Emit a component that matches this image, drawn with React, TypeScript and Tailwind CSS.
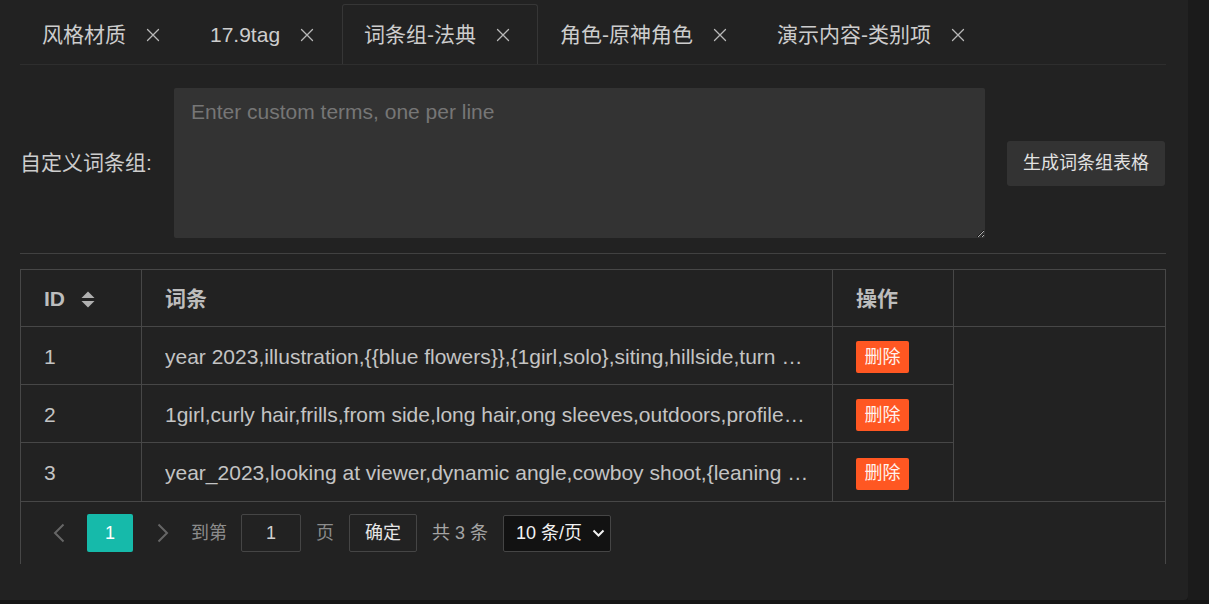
import React from "react";

const tabs = ["风格材质", "17.9tag", "词条组-法典", "角色-原神角色", "演示内容-类别项"];

const rows = [
  { id: 1, text: "year 2023,illustration,{{blue flowers}},{1girl,solo},siting,hillside,turn around,looking back,wind,petals" },
  { id: 2, text: "1girl,curly hair,frills,from side,long hair,ong sleeves,outdoors,profile,solo,upper body" },
  { id: 3, text: "year_2023,looking at viewer,dynamic angle,cowboy shoot,{leaning forward},smile" },
];

function CloseIcon() {
  return (
    <svg width="14" height="14" viewBox="0 0 14 14" className="shrink-0">
      <path d="M1.5 1.5L12.5 12.5M12.5 1.5L1.5 12.5" stroke="#b8b8b8" strokeWidth="1.3" strokeLinecap="round" />
    </svg>
  );
}

function SortIcon() {
  return (
    <svg width="14" height="17" viewBox="0 0 14 17" className="shrink-0">
      <path d="M7 0.5L13.5 7H0.5Z" fill="#b0b0b0" />
      <path d="M7 16.5L13.5 10H0.5Z" fill="#b0b0b0" />
    </svg>
  );
}

function Chevron({ dir }: { dir: "left" | "right" }) {
  return (
    <svg width="12" height="20" viewBox="0 0 12 20" className="shrink-0">
      {dir === "left" ? (
        <path d="M10.5 1.5L2 10L10.5 18.5" stroke="#666" strokeWidth="2" fill="none" />
      ) : (
        <path d="M1.5 1.5L10 10L1.5 18.5" stroke="#666" strokeWidth="2" fill="none" />
      )}
    </svg>
  );
}

export default function App() {
  return (
    <div className="w-[1209px] h-[604px] bg-[#161616] flex flex-col font-['Liberation_Sans','Noto_Sans_CJK_SC',sans-serif]">
      <div className="flex h-[600px]">
        <div className="w-[1188px] h-[600px] bg-[#222222] rounded-br-[4px] pl-[20px] pr-[22px] flex flex-col">
          {/* Tabs */}
          <div className="h-[65px] border-b border-[#2e2e2e] flex items-end shrink-0">
            {tabs.map((t, i) => (
              <div
                key={t}
                className={
                  "h-[60px] flex items-center pl-[21px] pr-[26px] border border-b-0 rounded-t-[3px] " +
                  (i === 2 ? "border-[#363636]" : "border-transparent")
                }
              >
                <span className="text-[21px] leading-none text-[#cdcdcd] whitespace-nowrap">{t}</span>
                <span className="ml-[19px] w-[16px] flex items-center justify-center">
                  <CloseIcon />
                </span>
              </div>
            ))}
          </div>

          {/* Custom term input */}
          <div className="mt-[23px] flex items-center">
            <div className="text-[21px] text-[#cdcdcd] whitespace-nowrap w-[132px]">自定义词条组:</div>
            <textarea
              className="ml-[22px] w-[811px] h-[150px] bg-[#333333] rounded-[2px] px-[17px] py-[10px] text-[21px] leading-[28px] text-[#ddd] placeholder:text-[#767676] outline-none resize"
              placeholder="Enter custom terms, one per line"
            />
            <button className="ml-[22px] w-[158px] h-[45px] bg-[#333333] rounded-[3px] text-[18px] text-[#e2e2e2] flex items-center justify-center">
              生成词条组表格
            </button>
          </div>

          <div className="mt-[15px] h-px bg-[#414141]" />

          {/* Table */}
          <div className="mt-[15px] border-t border-l border-r border-[#474747] flex flex-col">
            <div className="flex h-[57px] border-b border-[#474747]">
              <div className="w-[121px] border-r border-[#474747] px-[23px] pt-[2px] flex items-center">
                <span className="text-[21px] font-bold text-[#bdbdbd]">ID</span>
                <span className="ml-[16px] flex items-center">
                  <SortIcon />
                </span>
              </div>
              <div className="w-[691px] border-r border-[#474747] px-[23px] pt-[2px] flex items-center">
                <span className="text-[21px] font-bold text-[#bdbdbd]">词条</span>
              </div>
              <div className="w-[121px] border-r border-[#474747] px-[23px] pt-[2px] flex items-center">
                <span className="text-[21px] font-bold text-[#bdbdbd]">操作</span>
              </div>
              <div className="flex-1" />
            </div>

            <div className="flex border-b border-[#474747]">
              <div className="w-[933px] flex flex-col">
                {rows.map((r, i) => (
                  <div
                    key={r.id}
                    className={"flex h-[58px] " + (i < rows.length - 1 ? "border-b border-[#474747]" : "h-[57px]")}
                  >
                    <div className="w-[121px] border-r border-[#474747] px-[23px] pt-[2px] flex items-center text-[21px] text-[#c4c4c4]">
                      {r.id}
                    </div>
                    <div className="w-[691px] border-r border-[#474747] px-[23px] pt-[2px] flex items-center min-w-0">
                      <div className="truncate text-[21px] text-[#c4c4c4]">{r.text}</div>
                    </div>
                    <div className="w-[121px] border-r border-[#474747] px-[23px] pt-[3px] flex items-center">
                      <button className="w-[53px] h-[32px] bg-[#ff5722] rounded-[2px] text-[18px] text-[#fff3ee] flex items-center justify-center">
                        删除
                      </button>
                    </div>
                  </div>
                ))}
              </div>
              <div className="flex-1" />
            </div>

            {/* Pagination */}
            <div className="h-[62px] flex items-center pl-[32px]">
              <Chevron dir="left" />
              <div className="ml-[22px] w-[46px] h-[38px] bg-[#16baaa] rounded-[2px] flex items-center justify-center text-[18px] text-white">
                1
              </div>
              <div className="ml-[24px]">
                <Chevron dir="right" />
              </div>
              <span className="ml-[22px] text-[18px] text-[#8c8c8c]">到第</span>
              <div className="ml-[14px] w-[60px] h-[38px] border border-[#454545] rounded-[2px] flex items-center justify-center text-[18px] text-[#cfcfcf]">
                1
              </div>
              <span className="ml-[15px] text-[18px] text-[#8c8c8c]">页</span>
              <div className="ml-[15px] w-[68px] h-[38px] border border-[#454545] rounded-[2px] flex items-center justify-center text-[18px] text-[#e6e6e6]">
                确定
              </div>
              <span className="ml-[15px] text-[18px] text-[#a5a5a5] whitespace-pre">共 3 条</span>
              <div className="ml-[15px] w-[108px] h-[37px] bg-[#121212] border border-[#454545] rounded-[2px] flex items-center pl-[12px] text-[18px] text-[#f2f2f2]">
                <span className="whitespace-pre">10 条/页</span>
                <svg width="13" height="9" viewBox="0 0 13 9" className="ml-[10px]">
                  <path d="M1.5 1.5L6.5 6.5L11.5 1.5" stroke="#f2f2f2" strokeWidth="2" fill="none" />
                </svg>
              </div>
            </div>
          </div>
        </div>
        <div className="flex-1 bg-[#1b1b1b]" />
      </div>
    </div>
  );
}
